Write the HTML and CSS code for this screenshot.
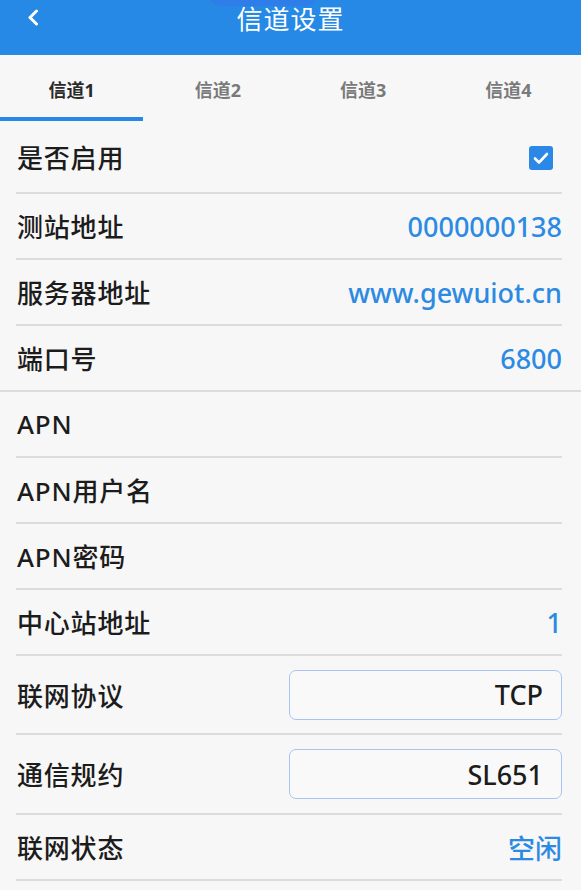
FILE: index.html
```html
<!DOCTYPE html>
<html lang="zh-CN">
<head>
<meta charset="utf-8">
<title>信道设置</title>
<link rel="stylesheet" href="styles.css">
</head>
<body>
<header class="appbar">
  <span class="notch"></span>
  <button class="back" aria-label="返回">
    <svg width="12" height="17" viewBox="0 0 12 17"><path d="M9.5 2 L3 8.5 L9.5 15" fill="none" stroke="#fff" stroke-width="3" stroke-linecap="round" stroke-linejoin="round"/></svg>
  </button>
  <h1 class="title">信道设置</h1>
</header>
<nav class="tabs">
  <div class="tab active">信道1</div>
  <div class="tab">信道2</div>
  <div class="tab">信道3</div>
  <div class="tab">信道4</div>
</nav>
<main class="list">
  <div class="row row-first">
    <span class="label">是否启用</span>
    <span class="check"><svg width="24" height="24" viewBox="0 0 24 24"><rect width="24" height="24" rx="3" fill="#2b88e6"/><path d="M6 12.5 L10 16.5 L18 8" fill="none" stroke="#fff" stroke-width="2.6" stroke-linecap="round" stroke-linejoin="round"/></svg></span>
  </div>
  <div class="row"><span class="label">测站地址</span><span class="value">0000000138</span></div>
  <div class="row"><span class="label">服务器地址</span><span class="value">www.gewuiot.cn</span></div>
  <div class="row row-full"><span class="label">端口号</span><span class="value">6800</span></div>
  <div class="row"><span class="label">APN</span><span class="value"></span></div>
  <div class="row"><span class="label">APN用户名</span><span class="value"></span></div>
  <div class="row"><span class="label">APN密码</span><span class="value"></span></div>
  <div class="row"><span class="label">中心站地址</span><span class="value">1</span></div>
  <div class="row row-select"><span class="label">联网协议</span><span class="select">TCP</span></div>
  <div class="row row-select row-select2"><span class="label">通信规约</span><span class="select">SL651</span></div>
  <div class="row"><span class="label">联网状态</span><span class="value">空闲</span></div>
</main>
</body>
</html>
```

FILE: styles.css
```css
html, body {
  margin: 0;
  padding: 0;
}
body {
  background: #f7f7f7;
  font-family: "Noto Sans", "Noto Sans CJK SC", sans-serif;
  color: #1c1c1c;
  width: 581px;
  overflow: hidden;
}
.appbar {
  position: relative;
  height: 55px;
  background: #2689e6;
  display: flex;
  justify-content: center;
}
.notch {
  position: absolute;
  left: 208px;
  top: -8px;
  width: 110px;
  height: 14px;
  border-radius: 0 0 14px 14px;
  background: #2f7de9;
}
.back {
  position: absolute;
  left: 27px;
  top: 9px;
  padding: 0;
  border: 0;
  background: none;
  line-height: 0;
}
.title {
  margin: 0;
  font-size: 26px;
  font-weight: 400;
  line-height: 36px;
  color: #fff;
  letter-spacing: 1px;
  font-family: "Noto Sans CJK SC", sans-serif;
}
.tabs {
  display: grid;
  grid-template-columns: repeat(4, 1fr);
  height: 66px;
}
.tab {
  display: flex;
  align-items: center;
  justify-content: center;
  font-size: 18px;
  font-weight: 700;
  color: #7a7a7a;
  padding-top: 1px;
}
.tab.active {
  color: #2a2a2a;
  box-shadow: inset 0 -4px 0 #2689e6;
  margin-right: 2px;
}
.list {
  display: flex;
  flex-direction: column;
}
.row {
  display: flex;
  align-items: center;
  justify-content: space-between;
  height: 64px;
  margin: 0 19px 0 16px;
  padding-left: 1px;
  border-bottom: 2px solid #dcdcdc;
  box-sizing: content-box;
}
.row-first {
  height: 70px;
  padding-top: 1px;
}
.row-full {
  margin-left: 0;
  margin-right: 0;
  padding-left: 17px;
  padding-right: 19px;
}
.row-select {
  height: 77px;
}
.row-select2 {
  height: 78px;
}
.label {
  font-size: 26px;
  font-weight: 500;
  letter-spacing: 0.8px;
}
.value {
  font-size: 27px;
  font-weight: 500;
  color: #2d8ae3;
}
.check {
  line-height: 0;
  margin-right: 9px;
  margin-top: 2px;
}
.select {
  width: 253px;
  height: 48px;
  border: 1px solid #a9c5ef;
  border-radius: 7px;
  display: flex;
  align-items: center;
  justify-content: flex-end;
  padding-right: 18px;
  font-size: 27px;
  font-weight: 500;
  color: #1c1c1c;
  background: #f9f9f9;
}
```
